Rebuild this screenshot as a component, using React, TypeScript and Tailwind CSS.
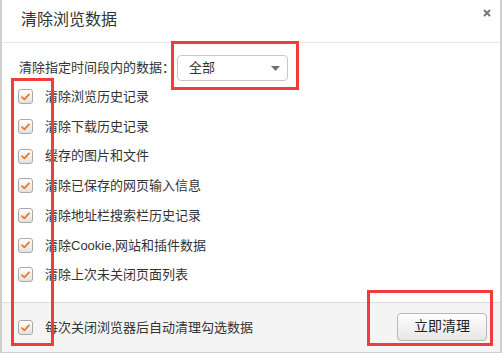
import React from 'react';

const options = [
  '清除浏览历史记录',
  '清除下载历史记录',
  '缓存的图片和文件',
  '清除已保存的网页输入信息',
  '清除地址栏搜索栏历史记录',
  '清除Cookie,网站和插件数据',
  '清除上次未关闭页面列表',
];

function CheckBox() {
  return (
    <span className="w-[15px] h-[15px] shrink-0 rounded-[3px] border border-[#a9a9a9] bg-gradient-to-b from-white to-[#e2e2e2] flex items-center justify-center shadow-[inset_0_1px_0_#fff]">
      <svg width="9" height="8" viewBox="0 0 9 8">
        <path d="M1 4.2 L3.4 6.4 L8 1.4" fill="none" stroke="#f07820" strokeWidth="1.8" strokeLinecap="round" strokeLinejoin="round" />
      </svg>
    </span>
  );
}

export default function App() {
  return (
    <div
      className="relative w-[502px] h-[355px] bg-white text-[#333] overflow-hidden"
      style={{ fontFamily: '"Liberation Sans", "Noto Sans CJK SC", sans-serif' }}
    >
      <div className="w-[502px] h-[353px] border-l-2 border-r-2 border-b border-[#cfcfcf] flex flex-col">
        {/* header */}
        <div className="h-[43px] shrink-0 border-b border-[#e6e6e6] flex items-start justify-between">
          <h1 className="pl-[19px] pt-[9px] text-[16px] leading-[22px] text-[#333]">清除浏览数据</h1>
          <svg className="mr-[9px] mt-[9px]" width="8" height="8" viewBox="0 0 8 8">
            <path d="M1 1 L7 7 M7 1 L1 7" stroke="#777" strokeWidth="2" />
          </svg>
        </div>

        {/* body */}
        <div className="flex-1 flex flex-col">
          <div className="mt-[12px] h-[26px] flex items-center pl-[17px] text-[13px]">
            <span>清除指定时间段内的数据：</span>
            <div className="ml-[2px] w-[111px] h-[26px] rounded-[4px] border border-[#c8c8c8] bg-white flex items-center justify-between pl-[11px] pr-[7px]">
              <span className="text-[13px]">全部</span>
              <svg width="9" height="5" viewBox="0 0 9 5">
                <path d="M0 0 L9 0 L4.5 5 Z" fill="#707070" />
              </svg>
            </div>
          </div>

          <div className="mt-[1px] flex flex-col">
            {options.map(o => (
              <label key={o} className="h-[29.7px] flex items-center gap-[12px] pl-[16px] text-[13px]">
                <CheckBox />
                <span>{o}</span>
              </label>
            ))}
          </div>
        </div>

        {/* footer */}
        <div className="h-[50px] shrink-0 border-t border-[#dedede] bg-[#f4f4f4] flex items-center justify-between pl-[16px] pr-[13px]">
          <label className="flex items-center gap-[12px] text-[13px]">
            <CheckBox />
            <span>每次关闭浏览器后自动清理勾选数据</span>
          </label>
          <button className="w-[90px] h-[28px] rounded-[4px] border border-[#b8b8b8] bg-gradient-to-b from-white to-[#e6e6e6] text-[14px] text-[#222] -mt-[2px]">
            立即清理
          </button>
        </div>
      </div>

      {/* red annotation boxes */}
      <div className="absolute left-[171px] top-[41px] w-[128px] h-[49px] border-[3px] border-[#f23b3b]" />
      <div className="absolute left-[11px] top-[78px] w-[43px] h-[268px] border-[3px] border-[#f23b3b]" />
      <div className="absolute left-[367px] top-[290px] w-[126px] h-[56px] border-[3px] border-[#f23b3b]" />
    </div>
  );
}
